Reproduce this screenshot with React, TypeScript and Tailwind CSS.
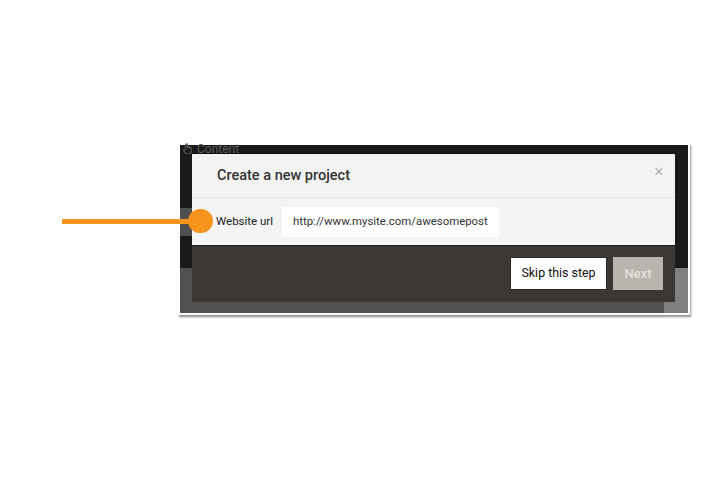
import React from "react";

export default function App() {
  return (
    <div className="relative w-[705px] h-[499px] bg-white overflow-hidden" style={{ fontFamily: "Roboto, 'Liberation Sans', sans-serif" }}>
      <div className="ml-[178px] mt-[143px] w-[512px] h-[172px] border-2 border-white shadow-[1px_2px_2px_rgba(0,0,0,0.45)] relative">
        <div className="flex flex-col h-full">
          <div className="h-[123px] bg-[#1a1a1a] flex flex-col">
            <div className="flex items-center h-[8px] overflow-visible">
              <div className="flex items-center gap-[4px] pl-[2px] -mt-[1px]">
                <svg width="11" height="11" viewBox="0 0 12 12" fill="none" stroke="#5a5a5a" strokeWidth="1.2">
                  <path d="M4 6V2a1 1 0 0 1 2 0v4m0-1a1 1 0 0 1 2 0v1m0-0.5a1 1 0 0 1 2 0V9a3 3 0 0 1-3 3H6a3 3 0 0 1-2.5-1.3L2 8.5a1 1 0 0 1 1.6-1.2L4 8" />
                </svg>
                <span className="text-[12px] leading-none text-[#5c5c5c]">Content</span>
              </div>
            </div>
            <div className="mt-[55px] w-[12px] h-[28px] bg-[#4f4f4f]" />
          </div>
          <div className="flex-1 bg-[#505050] flex justify-end">
            <div className="w-[24px] h-full bg-[#808080]" />
          </div>
        </div>

        <div className="absolute left-[12px] top-[8px] w-[483px] flex flex-col border-t border-[#111]">
          <div className="h-[44px] bg-[#f3f3f3] border-b border-[#e2e2e2] flex items-center justify-between pl-[25px] pr-[12px]">
            <span className="text-[14.5px] font-medium text-[#333]">Create a new project</span>
            <span className="text-[16px] leading-none text-[#b4b4b4] -mt-[8px]">×</span>
          </div>
          <div className="h-[48px] bg-[#f4f4f4] border-b border-[#1e1e1e] flex items-center pl-[24px]">
            <span className="text-[11.5px] text-[#222] w-[66px]">Website url</span>
            <div className="w-[217px] h-[30px] bg-white flex items-center pl-[11px] text-[11.4px] text-[#333]">
              http://www.mysite.com/awesomepost
            </div>
          </div>
          <div className="h-[56px] bg-[#3a3734] flex justify-end items-start pt-[11px] pr-[12px] gap-[6px]">
            <div className="w-[97px] h-[33px] bg-white border border-[#2a2a2a] flex items-center justify-center text-[12.4px] text-[#111]">
              Skip this step
            </div>
            <div className="w-[50px] h-[33px] bg-[#b9b4ae] flex items-center justify-center text-[13px] font-medium text-[#e4e0dc]">
              Next
            </div>
          </div>
        </div>
      </div>

      <div className="absolute left-[62px] top-[219px] w-[130px] h-[5px] bg-[#f7941d]" />
      <div className="absolute left-[188px] top-[209px] w-[25px] h-[24px] rounded-full bg-[#f7941d]" />
    </div>
  );
}
